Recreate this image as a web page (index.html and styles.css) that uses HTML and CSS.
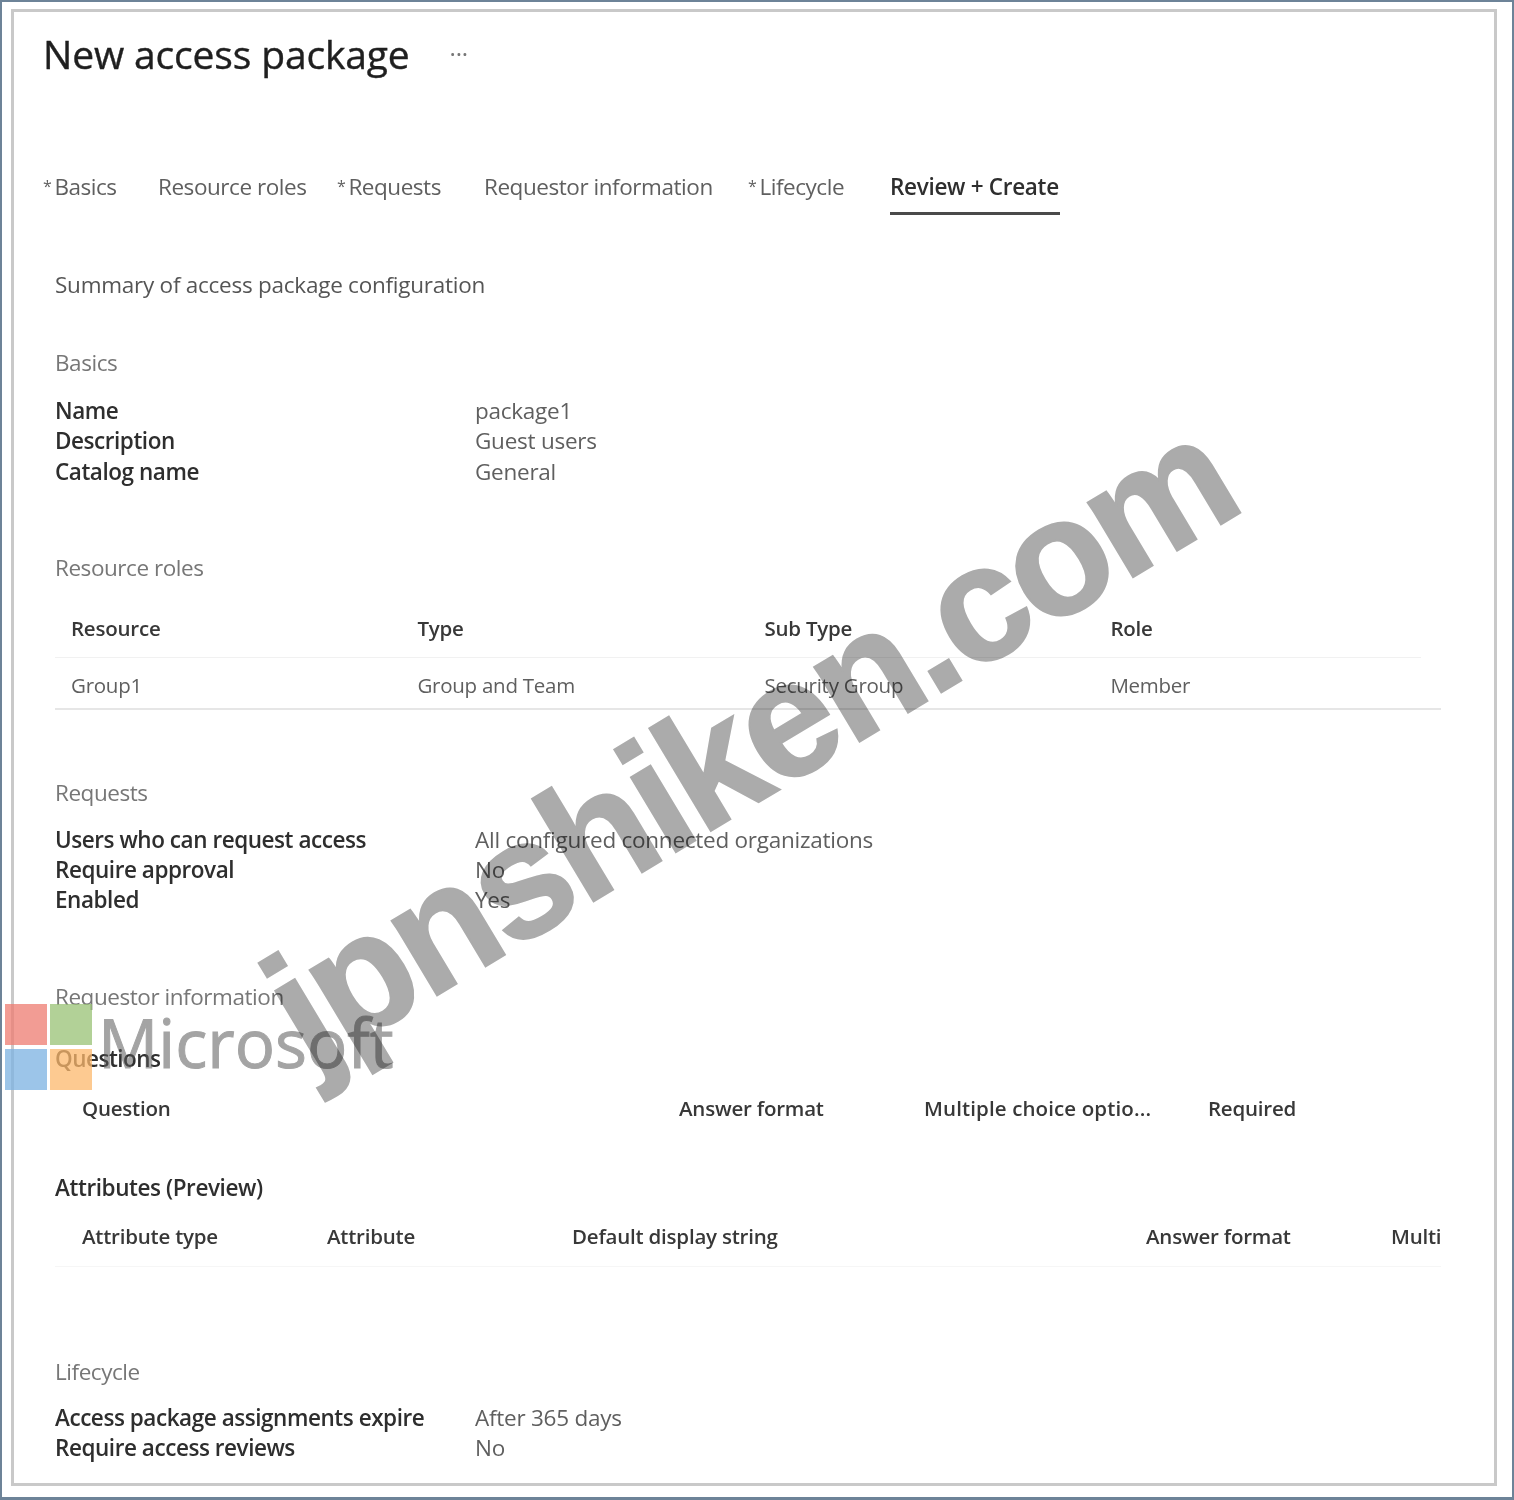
FILE: index.html
```html
<!DOCTYPE html>
<html lang="en">
<head>
  <meta charset="UTF-8">
  <meta name="viewport" content="width=device-width, initial-scale=1.0">
  <title>New access package</title>
  <link rel="stylesheet" href="styles.css">
</head>
<body>
  <div class="outer">
    <div class="panel">
      <div class="title-row">
        <h1>New access package</h1>
        <span class="more">···</span>
      </div>

      <div class="tabs">
        <span class="tab tab-basics"><i>*</i>Basics</span>
        <span class="tab tab-roles">Resource roles</span>
        <span class="tab tab-requests"><i>*</i>Requests</span>
        <span class="tab tab-info">Requestor information</span>
        <span class="tab tab-life"><i>*</i>Lifecycle</span>
        <span class="tab tab-review active">Review + Create</span>
      </div>

      <div class="content">
        <p class="summary">Summary of access package configuration</p>

        <h2 class="sec sec-basics">Basics</h2>
        <dl class="kv">
          <dt>Name</dt><dd>package1</dd>
          <dt>Description</dt><dd>Guest users</dd>
          <dt>Catalog name</dt><dd>General</dd>
        </dl>

        <h2 class="sec sec-roles">Resource roles</h2>
        <div class="table roles-table">
          <div class="row head">
            <span>Resource</span><span>Type</span><span>Sub Type</span><span>Role</span>
          </div>
          <div class="row body">
            <span>Group1</span><span>Group and Team</span><span>Security Group</span><span>Member</span>
          </div>
        </div>

        <h2 class="sec sec-requests">Requests</h2>
        <dl class="kv">
          <dt>Users who can request access</dt><dd>All configured connected organizations</dd>
          <dt>Require approval</dt><dd>No</dd>
          <dt>Enabled</dt><dd>Yes</dd>
        </dl>

        <h2 class="sec sec-info">Requestor information</h2>
        <h3 class="questions">Questions</h3>
        <div class="table q-table">
          <div class="row head">
            <span>Question</span><span>Answer format</span><span class="wide">Multiple choice optio...</span><span>Required</span>
          </div>
        </div>

        <h3 class="attrs">Attributes (Preview)</h3>
        <div class="table a-table">
          <div class="row head">
            <span>Attribute type</span><span>Attribute</span><span>Default display string</span><span>Answer format</span><span>Multi</span>
          </div>
        </div>

        <h2 class="sec sec-life">Lifecycle</h2>
        <dl class="kv">
          <dt>Access package assignments expire</dt><dd>After 365 days</dd>
          <dt>Require access reviews</dt><dd>No</dd>
        </dl>
      </div>
    </div>
  </div>

  <!-- watermarks sit over the page -->
  <div class="ms-logo">
    <div class="ms-squares">
      <span class="red"></span><span class="green"></span><span class="blue"></span><span class="orange"></span>
    </div>
    <span class="ms-word">Microsoft</span>
  </div>
  <div class="site-mark">jpnshiken.com</div>
</body>
</html>
```

FILE: styles.css
```css
* { box-sizing: border-box; }
html, body { margin: 0; padding: 0; }
body { width: 1514px; height: 1500px; position: relative; overflow: hidden; background: #fff; font-family: "Open Sans", "Noto Sans", sans-serif; font-size: 22.5px; letter-spacing: -0.25px; color: #666; }

.outer { height: 1500px; padding: 9px 15px 9px 9px; border: 2px solid #6d8398; border-bottom-width: 3px; background: #fff; }
.panel { height: 100%; margin: -2px 0 0 0; padding: 0 0 0 29px; border: 3px solid #c9c9c9; background: #fff; filter: blur(0.7px); }

.title-row { display: flex; align-items: center; height: 72px; margin-top: 5px; }
h1 { margin: 0; font-size: 39px; font-weight: 400; letter-spacing: -0.15px; color: #1f1f1f; -webkit-text-stroke: 0.4px #1f1f1f; }
.more { margin-left: 40px; font-size: 24px; color: #777; }

.tabs { display: flex; height: 55px; margin-top: 71px; letter-spacing: -0.45px; }
.tab { height: 55px; line-height: 54px; color: #5f5f5f; white-space: nowrap; }
.tab i { font-style: normal; font-size: 16px; margin-right: 3px; position: relative; top: -3px; }
.tab-basics { width: 115px; }
.tab-roles { width: 179px; }
.tab-requests { width: 147px; }
.tab-info { width: 264px; }
.tab-life { width: 142px; }
.tab.active { color: #2e2e2e; font-weight: 600; border-bottom: 3px solid #4a4a4a; width: 170px; letter-spacing: -0.3px; }

.content { padding: 0 0 0 12px; }
.summary { margin: 54px 0 0; line-height: 32px; color: #555; }

.sec { margin: 0; font-size: inherit; font-weight: 400; line-height: 32px; letter-spacing: -0.45px; color: #777; }
.sec-basics { margin-top: 46px; }
.sec-roles { margin-top: 65px; }
.sec-requests { margin-top: 67px; }
.sec-info { margin-top: 65px; }
.sec-life { margin-top: 89px; }

.kv { display: grid; grid-template-columns: 420px 1fr; grid-auto-rows: 30.3px; margin: 17px 0 0; line-height: 30px; }
.sec-requests + .kv { margin-top: 16px; }
.sec-life + .kv { margin-top: 15px; }
.kv dt { font-weight: 600; color: #2e2e2e; letter-spacing: -0.45px; }
.kv dd { margin: 0; color: #5f5f5f; }

.table { width: 1386px; font-size: 20.5px; }
.row { display: grid; }
.head { color: #383838; font-weight: 600; letter-spacing: -0.22px; }
.wide { letter-spacing: 0.12px; white-space: nowrap; }
.roles-table { margin-top: 29px; }
.roles-table .row { grid-template-columns: 346.4px 347px 346px 1fr; padding-left: 16px; }
.roles-table .head { height: 45px; line-height: 30px; margin-right: 20px; border-bottom: 1px solid #f1f1f1; }
.roles-table .body { height: 52px; line-height: 54px; color: #5f5f5f; font-weight: 400; border-bottom: 2px solid #e6e6e6; }

.questions { margin: 30px 0 0; font-size: inherit; font-weight: 600; line-height: 32px; color: #2e2e2e; letter-spacing: -0.5px; }
.attrs { margin: 49px 0 0; font-size: inherit; font-weight: 600; line-height: 32px; color: #2e2e2e; letter-spacing: -0.42px; }
.q-table { margin-top: 18px; }
.q-table .row { grid-template-columns: 597px 245px 284px 1fr; padding-left: 27px; line-height: 30px; }
.a-table { margin-top: 17px; }
.a-table .row { grid-template-columns: 245px 245px 574px 245px 1fr; padding-left: 27px; line-height: 30px; height: 46px; border-bottom: 1px solid #f6f6f6; }

/* watermarks */
.ms-logo { position: absolute; left: 5px; top: 1004px; display: flex; }
.ms-squares { display: grid; grid-template-columns: 42px 42px; grid-auto-rows: 41px; gap: 4px 3px; }
.red { background: rgba(237, 123, 112, 0.75); }
.green { background: rgba(152, 193, 116, 0.75); }
.blue { background: rgba(123, 177, 225, 0.75); }
.orange { background: rgba(252, 184, 108, 0.75); }
.ms-word { margin-left: 6px; margin-top: -5px; font-family: "Open Sans", sans-serif; font-size: 67px; font-weight: 500; line-height: 86px; letter-spacing: 0; color: #5a5a5a; -webkit-text-stroke: 1px #5a5a5a; opacity: 0.55; }
.site-mark { position: absolute; left: 203px; top: 642px; font-family: "Liberation Sans", Arial, sans-serif; font-size: 165px; line-height: 200px; font-weight: 700; letter-spacing: -5px; color: #ababab; -webkit-text-stroke: 2px #ababab; white-space: nowrap; transform: rotate(-31deg); transform-origin: center; mix-blend-mode: multiply; }
```
